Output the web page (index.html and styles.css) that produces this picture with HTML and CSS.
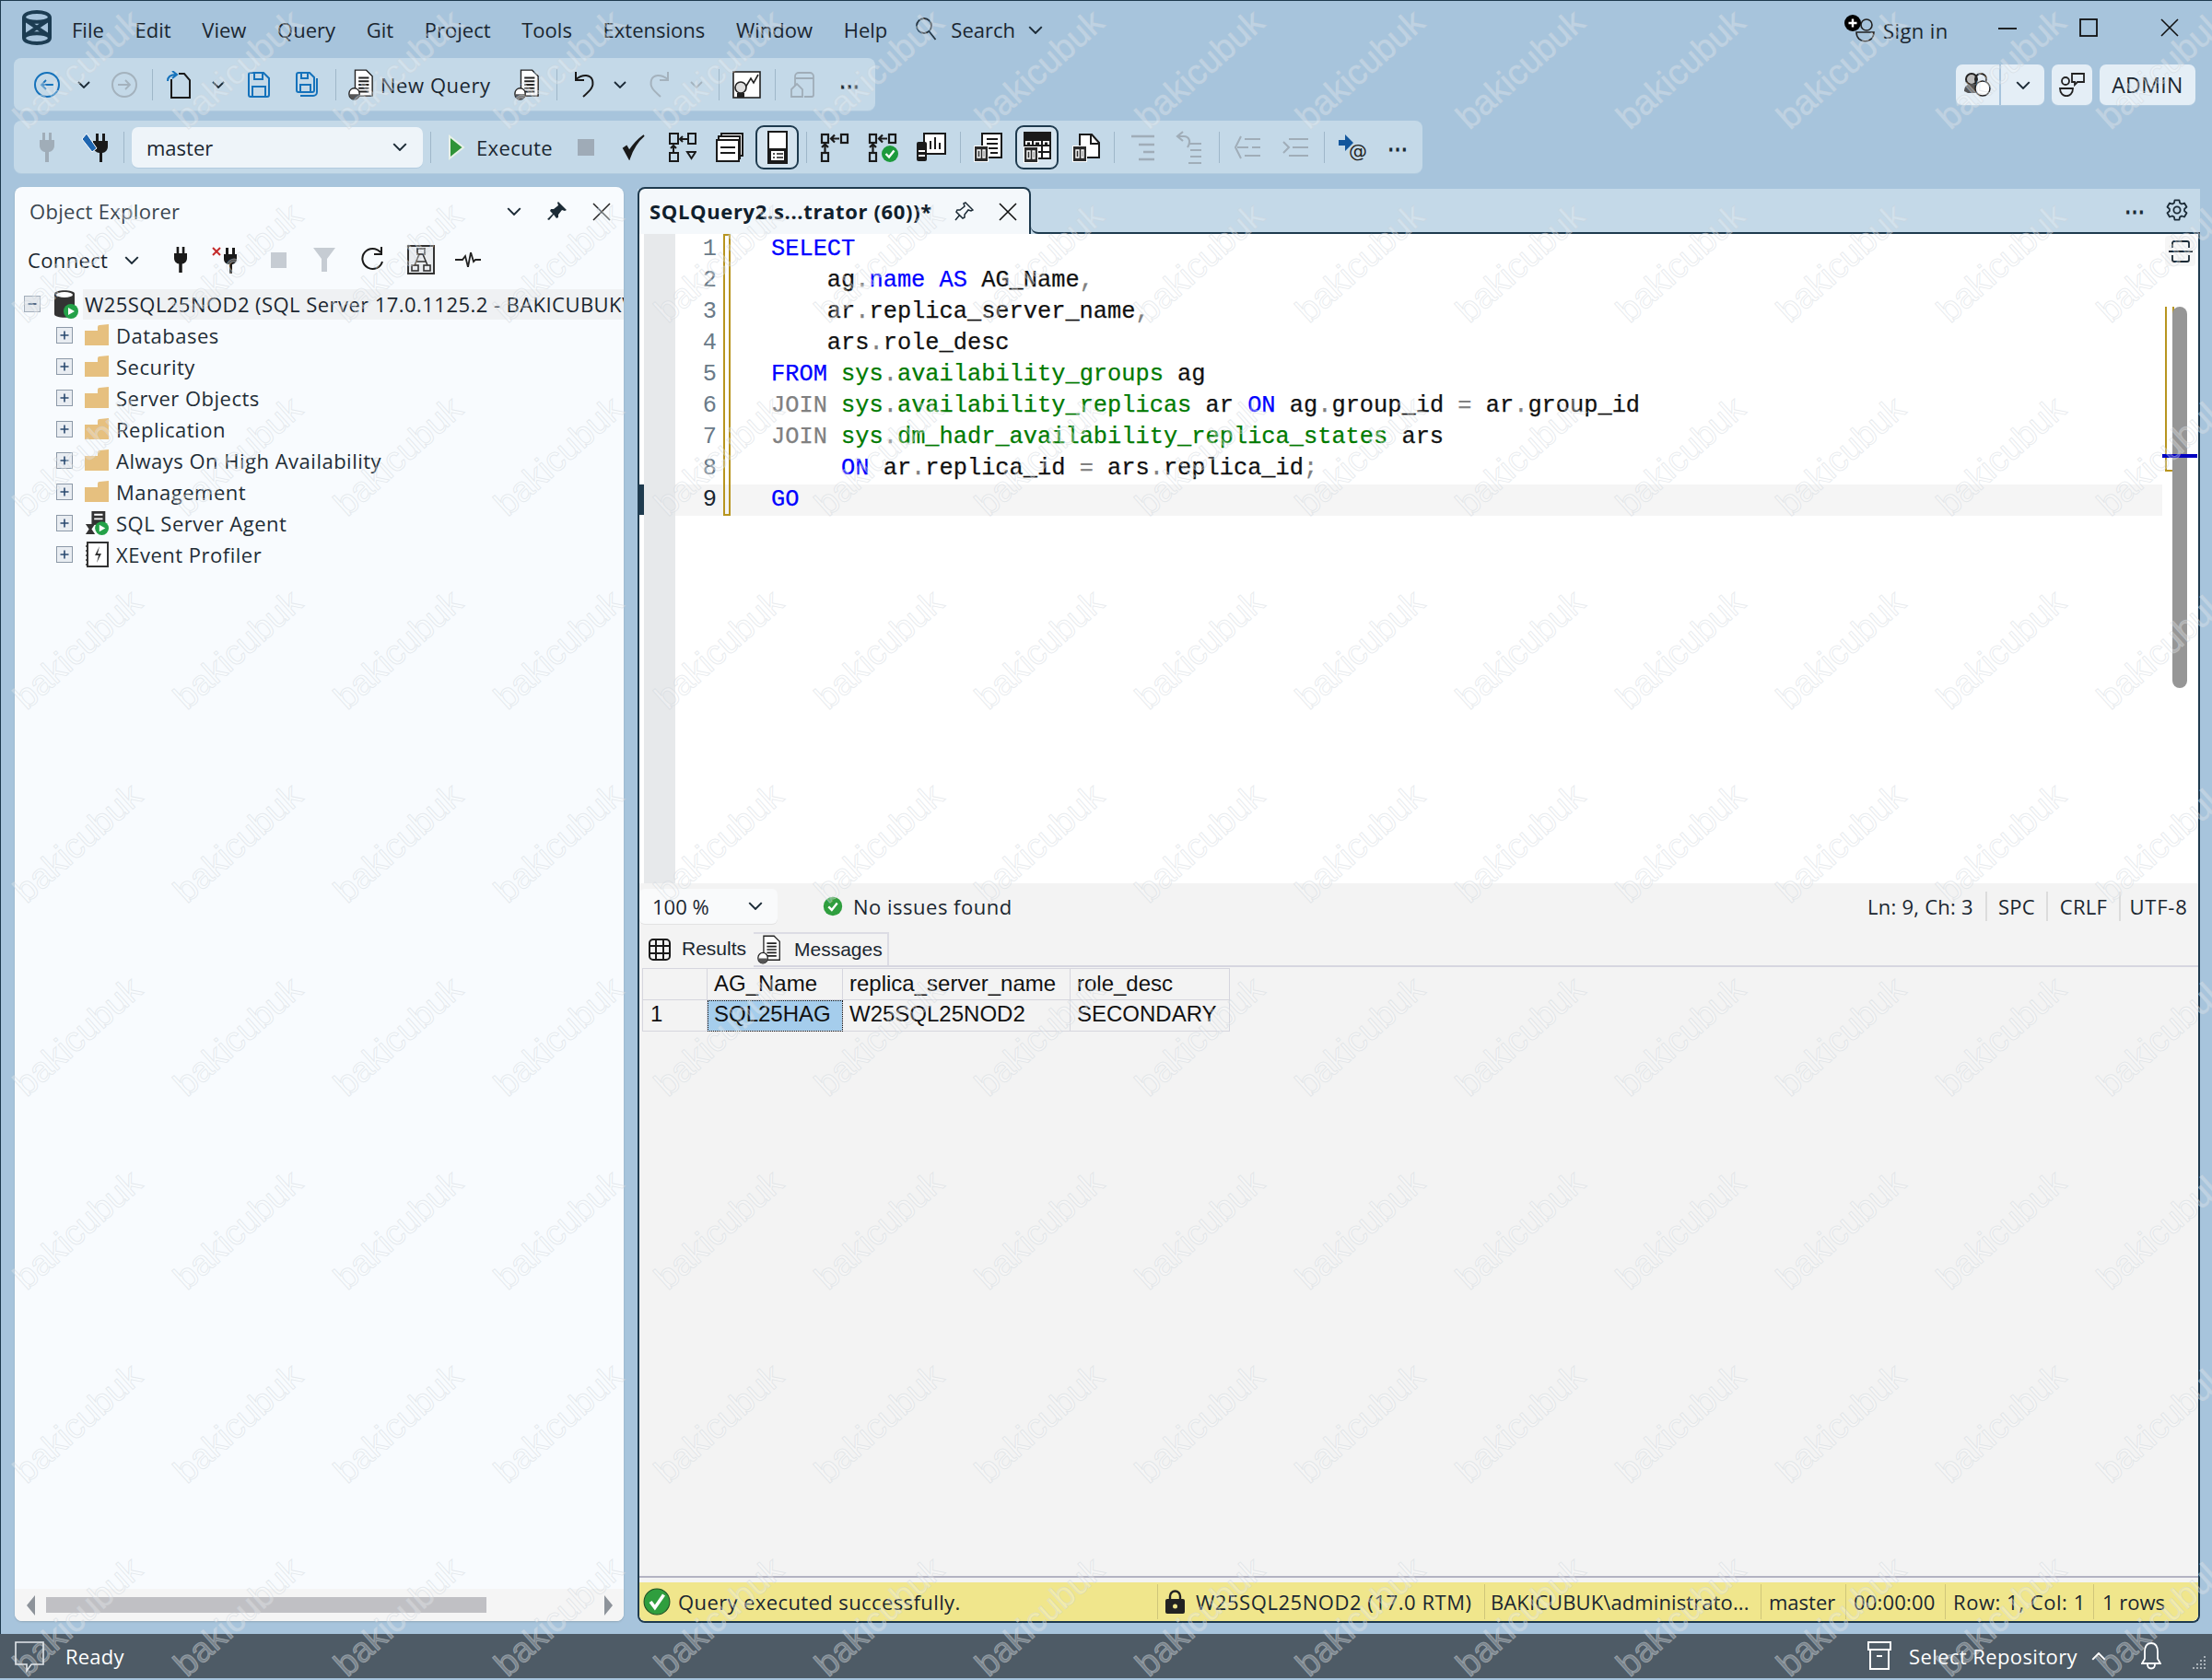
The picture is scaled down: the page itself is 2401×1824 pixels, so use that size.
FILE: index.html
```html
<!DOCTYPE html>
<html lang="en">
<head>
<meta charset="utf-8">
<title>SSMS</title>
<link rel="stylesheet" href="styles.css">
</head>
<body>
<svg class="defs" width="0" height="0" aria-hidden="true">
  <defs>
    <symbol id="chev" viewBox="0 0 14 8"><polyline points="1,1 7,7 13,1" fill="none" stroke="currentColor" stroke-width="1.8"/></symbol>
    <symbol id="plus" viewBox="0 0 18 18"><rect x=".5" y=".5" width="17" height="17" fill="#e9edf2" stroke="#8c99a8"/><path d="M4.5 9h9M9 4.5v9" stroke="#2b4a70" stroke-width="1.6"/></symbol>
    <symbol id="folder" viewBox="0 0 26 24"><path d="M0 7 L14 7 L14 3 Q14 1 16 1 L26 0 V23 H0Z" fill="#e6c07f"/></symbol>
    <symbol id="plug" viewBox="0 0 18 32"><path d="M4 0h3v8H4zM11 0h3v8h-3zM1 8h16v6c0 4-3 7-6 7v11H7V21c-3 0-6-3-6-7z" fill="currentColor"/></symbol>
    <symbol id="docplug" viewBox="0 0 30 36"><path d="M8 1h13l7 7v23H8z" fill="#fff" stroke="#222" stroke-width="1.5"/><path d="M12 10h12M12 14h12M12 18h12M12 22h12M12 26h12" stroke="#222" stroke-width="2"/><rect x="1" y="22" width="12" height="13" rx="6" fill="#fff" stroke="#222" stroke-width="1.5"/><path d="M1.5 29h11v1a5 5 0 0 1-11 0z" fill="#555"/></symbol>
    <symbol id="ok" viewBox="0 0 28 28"><circle cx="14" cy="14" r="13" fill="#2f9e3e"/><polyline points="8,14.5 12.5,19 20,9.5" fill="none" stroke="#fff" stroke-width="3"/></symbol>
    <symbol id="tbl01" viewBox="0 0 16 18"><rect width="16" height="18" fill="#fff"/><rect x="1" y="1" width="14" height="16" fill="#2a2a2a"/><path d="M4 5h3v8H4zM10 5h2v8h-2z" fill="none" stroke="#fff" stroke-width="1.4"/></symbol>
    <symbol id="flow" viewBox="0 0 32 32"><g fill="none" stroke="#1a1a1a" stroke-width="2.2"><rect x="2" y="2" width="7" height="9"/><rect x="23" y="2" width="7" height="9"/><rect x="2" y="22" width="7" height="9"/><path d="M21 6.500H12M16 2.500l-4 4 4 4M5.500 21V13M2 16l3.500-3.500L9 16"/></g></symbol>
  </defs>
</svg>
<div class="app">
  <header class="titlebar">
    <svg class="logo" width="34" height="38" viewBox="0 0 34 38"><g fill="none" stroke="#1c3c52" stroke-width="4"><path d="M3 8c0-8 28-8 28 0v22c0 8-28 8-28 0z"/></g><path d="M3 9c6 5 22 5 28 0M3 29c6-5 22-5 28 0M5 11l24 16M29 11L5 27" fill="none" stroke="#1c3c52" stroke-width="4"/></svg>
    <nav class="menu">
      <span class="mi">File</span><span class="mi">Edit</span><span class="mi">View</span><span class="mi">Query</span><span class="mi">Git</span><span class="mi">Project</span><span class="mi">Tools</span><span class="mi">Extensions</span><span class="mi">Window</span><span class="mi">Help</span>
    </nav>
    <div class="search">
      <svg width="24" height="26" viewBox="0 0 24 26"><circle cx="10" cy="10" r="8" fill="none" stroke="#26343f" stroke-width="1.8"/><path d="M15.5 16l7 9" stroke="#26343f" stroke-width="1.8"/></svg>
      <span class="search-label">Search</span>
      <svg class="chev" width="16" height="9"><use href="#chev"/></svg>
    </div>
    <div class="signin">
      <svg width="33" height="30" viewBox="0 0 33 30"><circle cx="24" cy="11" r="6" fill="none" stroke="#222" stroke-width="1.6"/><path d="M13 19h19c0 13-19 13-19 0z" fill="none" stroke="#222" stroke-width="1.6"/><circle cx="9" cy="9" r="9" fill="#000"/><path d="M4.5 9h9M9 4.5v9" stroke="#fff" stroke-width="2.4"/></svg>
      <span class="signin-label">Sign in</span>
    </div>
    <div class="winctl">
      <svg width="20" height="20" viewBox="0 0 20 20"><path d="M0 11h20" stroke="#111" stroke-width="1.8"/></svg>
      <svg width="20" height="20" viewBox="0 0 20 20"><rect x="1" y="1" width="18" height="18" fill="none" stroke="#111" stroke-width="1.8"/></svg>
      <svg width="20" height="20" viewBox="0 0 20 20"><path d="M1 1l18 18M19 1L1 19" stroke="#111" stroke-width="1.6"/></svg>
    </div>
  </header>

  <section class="toolarea">
    <div class="toolcol">
      <div class="toolbar tb1">
        <svg class="ml22" width="28" height="30" viewBox="0 0 28 30"><circle cx="14" cy="15" r="13" fill="none" stroke="#1572bb" stroke-width="2"/><path d="M21 15H8M13 10l-5 5 5 5" fill="none" stroke="#1572bb" stroke-width="1.8"/></svg>
        <svg class="ml19 chev" width="14" height="8"><use href="#chev"/></svg>
        <svg class="ml23" width="28" height="30" viewBox="0 0 28 30"><circle cx="14" cy="15" r="13" fill="none" stroke="#a4b2bd" stroke-width="2"/><path d="M7 15h13M15 10l5 5-5 5" fill="none" stroke="#a4b2bd" stroke-width="1.8"/></svg>
        <i class="sep ml16"></i>
        <svg class="ml14" width="28" height="30" viewBox="0 0 28 30"><path d="M6 9v20h20V10l-6-7h-6" fill="none" stroke="#1a1a1a" stroke-width="2"/><path d="M2 11c0-5 3-7 9-7M7 0l5 4-5 4" fill="none" stroke="#1572bb" stroke-width="2"/></svg>
        <svg class="ml22 chev" width="14" height="8"><use href="#chev"/></svg>
        <svg class="ml25" width="24" height="28" viewBox="0 0 24 28"><path d="M3 1h14l6 6v18a2 2 0 0 1-2 2H3a2 2 0 0 1-2-2V3a2 2 0 0 1 2-2z M7 1v7h9V1M5 27V16h14v11" fill="none" stroke="#1572bb" stroke-width="2"/></svg>
        <svg class="ml28" width="24" height="28" viewBox="0 0 24 28"><path d="M3 1h12l5 5v14a2 2 0 0 1-2 2H3a2 2 0 0 1-2-2V3a2 2 0 0 1 2-2zM6 1v6h7V1M5 22v-8h11v8M23 7v15a4 4 0 0 1-4 4H5" fill="none" stroke="#1572bb" stroke-width="2"/></svg>
        <i class="sep ml19"></i>
        <svg class="ml13" width="28" height="34"><use href="#docplug"/></svg>
        <span class="newq">New Query</span>
        <svg class="ml22" width="28" height="34"><use href="#docplug"/></svg>
        <i class="sep ml18"></i>
        <svg class="ml17" width="24" height="30" viewBox="0 0 24 30"><path d="M11 28c8-7 12-11 10-18C19 4 11 3 3 9M3 1v9h9" fill="none" stroke="#1a1a1a" stroke-width="2"/></svg>
        <svg class="ml20 chev" width="14" height="8"><use href="#chev"/></svg>
        <svg class="ml24" width="24" height="30" viewBox="0 0 24 30"><path d="M13 28C5 21 1 17 3 10 5 4 13 3 21 9M21 1v9h-9" fill="none" stroke="#a4b2bd" stroke-width="2"/></svg>
        <svg class="ml21 chev faded" width="14" height="8"><use href="#chev"/></svg>
        <i class="sep ml17"></i>
        <svg class="ml14" width="31" height="30" viewBox="0 0 31 30"><rect x="1" y="1" width="29" height="28" fill="#fff" stroke="#222" stroke-width="1.6"/><path d="M14 18l6-10 3 5 5-9" fill="none" stroke="#222" stroke-width="1.6"/><circle cx="9" cy="18" r="6" fill="#ddd" stroke="#222" stroke-width="1.6"/><rect x="5" y="24" width="8" height="5" fill="#222"/></svg>
        <i class="sep ml15"></i>
        <svg class="ml15" width="28" height="30" viewBox="0 0 28 30"><path d="M6 16V6a4 4 0 0 1 4-4h12a4 4 0 0 1 4 4v20a2 2 0 0 1-2 2h-8M6 8h20" fill="none" stroke="#a0adb8" stroke-width="1.8"/><path d="M2 20l6-6 6 6v8H2z" fill="none" stroke="#a0adb8" stroke-width="1.8"/></svg>
        <span class="dots ml23">&#8943;</span>
      </div>
      <div class="toolbar tb2">
        <svg class="ml27 fadeicon" width="18" height="32"><use href="#plug"/></svg>
        <svg class="ml28" width="30" height="34" viewBox="0 0 30 34"><path d="M16 2h3v8h-3zM23 2h3v8h-3zM13 10h16v6c0 4-3 7-6 7v10h-3V23c-3 0-7-3-7-7z" fill="#1a1a1a"/><path d="M1 8l5-6 11 16-5 4z" fill="#1f66b0" stroke="#fff"/></svg>
        <i class="sep ml16"></i>
        <div class="combo ml8"><span>master</span><svg class="chev" width="16" height="9"><use href="#chev"/></svg></div>
        <i class="sep ml8"></i>
        <svg class="ml18" width="19" height="30" viewBox="0 0 19 30"><path d="M2 3l15 12L2 27z" fill="#2f9338" stroke="#e8f1e8" stroke-width="2"/></svg>
        <span class="exec">Execute</span>
        <svg class="ml30" width="18" height="18" viewBox="0 0 18 18"><rect width="18" height="18" fill="#9fabb7"/></svg>
        <svg class="ml29" width="28" height="28" viewBox="0 0 28 28"><path d="M3 15l6 11C13 14 18 7 25 1 18 6 13 12 9 18L6 13z" fill="#1a1a1a" stroke="#1a1a1a" stroke-width="2"/></svg>
        <svg class="ml24" width="30" height="32" viewBox="0 0 30 32"><g fill="none" stroke="#1a1a1a" stroke-width="2"><rect x="1" y="1" width="9" height="11"/><rect x="21" y="1" width="8" height="11"/><rect x="1" y="22" width="9" height="9"/><path d="M20 7h-8M15 4l-3 3 3 3M5 21v-6M2 17l3-3 3 3M20 21h9l-4.500 7z"/></g></svg>
        <svg class="ml21" width="30" height="32" viewBox="0 0 30 32"><g fill="#fff" stroke="#1a1a1a" stroke-width="2"><rect x="6" y="1" width="23" height="24"/><rect x="3" y="4" width="23" height="24"/><rect x="1" y="8" width="24" height="23"/></g><path d="M5 16h16M5 22h16" stroke="#1a1a1a" stroke-width="2"/></svg>
        <div class="toggle ml13"><svg width="22" height="36" viewBox="0 0 22 36"><rect x="1" y="1" width="20" height="34" fill="#fff" stroke="#1a1a1a" stroke-width="2"/><rect x="1" y="19" width="20" height="16" fill="#1a1a1a"/><rect x="4" y="22" width="14" height="10" fill="#fff"/><path d="M6 25h2M10 25h7M6 29h2M10 29h7" stroke="#1a1a1a" stroke-width="1.5"/></svg></div>
        <i class="sep ml8"></i>
        <svg class="ml14" width="32" height="32"><use href="#flow"/></svg>
        <svg class="ml20" width="33" height="32" viewBox="0 0 33 32"><use href="#flow" width="32" height="32"/><circle cx="24" cy="23" r="9" fill="#1d9a3c"/><polyline points="19.500,23 23,26.500 28.500,19.500" fill="none" stroke="#fff" stroke-width="2.400"/></svg>
        <svg class="ml19" width="33" height="32" viewBox="0 0 33 32"><rect x="9" y="1" width="23" height="22" fill="#fff" stroke="#1a1a1a" stroke-width="2"/><path d="M16 18V9M21 18V5M26 18v-7" stroke="#1a1a1a" stroke-width="2"/><rect x="1" y="10" width="11" height="21" rx="2" fill="#1a1a1a"/><path d="M3 20h7M3 25h7" stroke="#fff" stroke-width="2"/></svg>
        <i class="sep ml15"></i>
        <svg class="ml14" width="31" height="32" viewBox="0 0 31 32"><rect x="9" y="1" width="21" height="26" fill="#fff" stroke="#1a1a1a" stroke-width="2"/><path d="M14 7h12M14 12h12M14 17h12M18 22h8" stroke="#1a1a1a" stroke-width="2"/><use href="#tbl01" x="0" y="14" width="16" height="18"/></svg>
        <div class="toggle ml14"><svg width="30" height="34" viewBox="0 0 30 34"><rect x="1" y="1" width="28" height="28" fill="#fff" stroke="#1a1a1a" stroke-width="2"/><rect x="1" y="1" width="28" height="9" fill="#1a1a1a"/><path d="M1 15h28M1 22h28M10 10v19M20 10v19" stroke="#1a1a1a" stroke-width="2"/><path d="M4 13h3M13 13h4M23 13h3" stroke="#1a1a1a" stroke-width="3"/><use href="#tbl01" x="0" y="16" width="16" height="18"/></svg></div>
        <svg class="ml15" width="30" height="32" viewBox="0 0 30 32"><path d="M8 18V2h13l8 9v16H16" fill="#fff" stroke="#1a1a1a" stroke-width="2"/><path d="M20 2v10h9" fill="none" stroke="#1a1a1a" stroke-width="2"/><use href="#tbl01" x="0" y="14" width="16" height="18"/></svg>
        <i class="sep ml15"></i>
        <svg class="ml17" width="27" height="30" viewBox="0 0 27 30"><path d="M1 3h10M9 3h17M9 12h17M14 20h12M9 28h17" stroke="#a0adb8" stroke-width="2.400" fill="none"/></svg>
        <svg class="ml22" width="28" height="36" viewBox="0 0 28 36"><path d="M8 1L2 6l6 5M2 6h7c6 0 8 6 4 12M14 14h14M16 21h12M16 28h12M14 35h14" stroke="#a0adb8" stroke-width="2.200" fill="none"/></svg>
        <i class="sep ml19"></i>
        <svg class="ml15" width="29" height="28" viewBox="0 0 29 28"><path d="M8 2L2 14l6 12M4 14h12M12 5h17M12 23h17M20 14h9" stroke="#a0adb8" stroke-width="2" fill="none"/></svg>
        <svg class="ml23" width="29" height="28" viewBox="0 0 29 28"><path d="M2 8l6 6-6 6M8 5h21M12 14h17M8 23h21" stroke="#a0adb8" stroke-width="2" fill="none"/></svg>
        <i class="sep ml17"></i>
        <svg class="ml15" width="30" height="30" viewBox="0 0 30 30"><path d="M0 7h7V1l9 9-9 9v-6H0z" fill="#12569c"/><text class="at" x="11" y="26">@</text></svg>
        <span class="dots ml20">&#8943;</span>
      </div>
    </div>
    <div class="account">
      <div class="acct split">
        <span class="acct-cell"><svg width="32" height="30" viewBox="0 0 32 30"><circle cx="9" cy="9" r="6" fill="#bbb" stroke="#222" stroke-width="2"/><circle cx="19" cy="9" r="6" fill="none" stroke="#222" stroke-width="2"/><path d="M1 22c0-6 4-8 9-8s8 2 9 4v6H5z" fill="#555"/><circle cx="21" cy="19" r="8" fill="#fff" stroke="#222" stroke-width="1.500"/></svg></span>
        <span class="acct-cell narrow"><svg class="chev" width="16" height="9"><use href="#chev"/></svg></span>
      </div>
      <div class="acct chat"><svg width="28" height="26" viewBox="0 0 28 26"><circle cx="7" cy="9" r="4" fill="none" stroke="#222" stroke-width="1.800"/><path d="M1 17h14c0 11-14 11-14 0z" fill="none" stroke="#222" stroke-width="1.800"/><path d="M14 1h13v9h-7l-3 3V10h-3z" fill="none" stroke="#222" stroke-width="1.800"/></svg></div>
      <div class="acct admin">ADMIN</div>
    </div>
  </section>

  <main class="workspace">
    <aside class="explorer">
      <div class="ex-title">
        <span class="ex-name">Object Explorer</span>
        <svg class="chev ex-chev" width="16" height="9"><use href="#chev"/></svg>
        <svg class="ex-pin" width="21" height="21" viewBox="0 0 21 21"><path d="M12 0l9 9-2 1-3-1-4 5 0 3-2 1-3-4-5 6-2-1 6-6-3-3 1-2 3 0 5-4-1-3z" fill="#1c2b36"/></svg>
        <svg class="ex-close" width="20" height="20" viewBox="0 0 20 20"><path d="M1 1l18 18M19 1L1 19" stroke="#222" stroke-width="1.500"/></svg>
      </div>
      <div class="ex-tools">
        <span class="connect">Connect</span>
        <svg class="chev ml15" width="16" height="9"><use href="#chev"/></svg>
        <svg class="et-plug dark" width="16" height="28"><use href="#plug"/></svg>
        <svg class="ml26" width="30" height="30" viewBox="0 0 30 30"><path d="M1 2l8 8M9 2l-8 8" stroke="#c42b2b" stroke-width="2"/><path d="M15 2h3v7h-3zM22 2h3v7h-3zM13 9h14v5c0 4-3 6-5 6v10h-3V20c-3 0-6-2-6-6z" fill="#1a1a1a"/></svg>
        <svg class="et-stop" width="17" height="17" viewBox="0 0 17 17"><rect width="17" height="17" fill="#c6ccd3"/></svg>
        <svg class="ml29" width="24" height="26" viewBox="0 0 24 26"><path d="M0 0h24l-9 12v14h-6V12z" fill="#c6ccd3"/></svg>
        <svg class="ml27" width="26" height="28" viewBox="0 0 26 28"><path d="M22 6a11 11 0 1 0 2 10" fill="none" stroke="#1a1a1a" stroke-width="2"/><path d="M23 0v8h-8" fill="none" stroke="#1a1a1a" stroke-width="2"/></svg>
        <svg class="ml25" width="30" height="32" viewBox="0 0 30 32"><rect x="1" y="1" width="28" height="30" fill="#e9ecef" stroke="#333" stroke-width="2"/><g fill="none" stroke="#333" stroke-width="1.600"><rect x="11" y="4" width="8" height="6"/><rect x="5" y="22" width="7" height="6"/><rect x="18" y="22" width="7" height="6"/><path d="M13 10L8 22M17 10l5 12M9 18h12"/></g></svg>
        <svg class="ml22" width="28" height="16" viewBox="0 0 28 16"><path d="M0 8h8l3-4 3 12 3-16 3 10 2-2h6" fill="none" stroke="#222" stroke-width="1.800"/></svg>
      </div>
      <ul class="tree">
        <li class="tree-root">
          <svg class="tw" width="18" height="18" viewBox="0 0 18 18"><rect x=".5" y=".5" width="17" height="17" fill="#e4e8ed" stroke="#a3aeba"/><path d="M4.500 9h9" stroke="#2b4a70" stroke-width="1.600"/></svg>
          <svg class="srv" width="27" height="32" viewBox="0 0 27 32"><path d="M1 5c0-5 22-5 22 0v22c0 5-22 5-22 0z" fill="#333"/><ellipse cx="12" cy="6" rx="9" ry="3" fill="#fff"/><circle cx="19" cy="24" r="8" fill="#24a148"/><path d="M16 20l7 4-7 4z" fill="#fff"/></svg>
          <span class="tree-server">W25SQL25NOD2 (SQL Server 17.0.1125.2 - BAKICUBUK\administrator)</span>
        </li>
        <li class="tree-item"><svg class="tw" width="18" height="18"><use href="#plus"/></svg><svg class="ti" width="26" height="24"><use href="#folder"/></svg><span>Databases</span></li>
        <li class="tree-item"><svg class="tw" width="18" height="18"><use href="#plus"/></svg><svg class="ti" width="26" height="24"><use href="#folder"/></svg><span>Security</span></li>
        <li class="tree-item"><svg class="tw" width="18" height="18"><use href="#plus"/></svg><svg class="ti" width="26" height="24"><use href="#folder"/></svg><span>Server Objects</span></li>
        <li class="tree-item"><svg class="tw" width="18" height="18"><use href="#plus"/></svg><svg class="ti" width="26" height="24"><use href="#folder"/></svg><span>Replication</span></li>
        <li class="tree-item"><svg class="tw" width="18" height="18"><use href="#plus"/></svg><svg class="ti" width="26" height="24"><use href="#folder"/></svg><span>Always On High Availability</span></li>
        <li class="tree-item"><svg class="tw" width="18" height="18"><use href="#plus"/></svg><svg class="ti" width="26" height="24"><use href="#folder"/></svg><span>Management</span></li>
        <li class="tree-item"><svg class="tw" width="18" height="18"><use href="#plus"/></svg><svg class="ti" width="28" height="28" viewBox="0 0 28 28"><rect x="8" y="0" width="16" height="16" fill="#333"/><path d="M11 4h10M11 9h10" stroke="#fff" stroke-width="2"/><path d="M1 15h11L8 21l4 6H1l4-6z" fill="#333"/><circle cx="20" cy="20" r="8" fill="#24a148"/><path d="M17 16l7 4-7 4z" fill="#fff"/></svg><span>SQL Server Agent</span></li>
        <li class="tree-item"><svg class="tw" width="18" height="18"><use href="#plus"/></svg><svg class="ti" width="26" height="28" viewBox="0 0 26 28"><rect x="3" y="1" width="22" height="26" fill="#fff" stroke="#333" stroke-width="2"/><path d="M1 5h3M1 10h3M1 15h3M1 20h3M1 25h3" stroke="#333" stroke-width="1.500"/><path d="M16 5l-5 10h4l-2 8 5-10h-4z" fill="#333"/></svg><span>XEvent Profiler</span></li>
      </ul>
      <div class="ex-scroll">
        <svg width="9" height="22" viewBox="0 0 9 22"><path d="M9 0v22L0 11z" fill="#8d939a"/></svg>
        <div class="ex-track"><div class="ex-thumb"></div></div>
        <svg width="9" height="22" viewBox="0 0 9 22"><path d="M0 0v22l9-11z" fill="#8d939a"/></svg>
      </div>
    </aside>

    <section class="docwell">
      <div class="tabstrip">
        <div class="tab">
          <span class="tab-name">SQLQuery2.s...trator (60))*</span>
          <svg class="tab-pin" width="21" height="21" viewBox="0 0 21 21"><path d="M12 1l8 8-2 1-3-1-4 5 0 3-2 1-7-7 1-2 3 0 5-4-1-3zM6 14l-5 6" fill="none" stroke="#1c2b36" stroke-width="1.500"/></svg>
          <svg class="tab-x" width="20" height="20" viewBox="0 0 20 20"><path d="M1 1l18 18M19 1L1 19" stroke="#111" stroke-width="1.600"/></svg>
        </div>
        <div class="tab-rest">
          <span class="dots">&#8943;</span>
          <svg width="24" height="24" viewBox="0 0 24 24"><path d="M9.500 1.300L14.500 1.300 15.100 4.400 17.050 5.500 20 4.500 22.500 8.800 20.100 10.900 20.100 13.100 22.500 15.200 20 19.500 17.050 18.500 15.100 19.600 14.500 22.700 9.500 22.700 8.900 19.600 6.950 18.500 4 19.500 1.500 15.200 3.900 13.100 3.900 10.900 1.500 8.800 4 4.500 6.950 5.500 8.900 4.400Z" fill="none" stroke="#1a2a36" stroke-width="1.800" stroke-linejoin="round"/><circle cx="12" cy="12" r="3.600" fill="none" stroke="#1a2a36" stroke-width="1.800"/></svg>
        </div>
      </div>
      <div class="editor">
        <div class="marker"><div class="marker-on"></div></div>
        <div class="glyphs"></div>
        <div class="lines">
          <div class="line first"><span class="num">1</span><i class="chg"></i><code class="code"><b class="k">SELECT</b></code></div>
          <div class="line"><span class="num">2</span><i class="chg"></i><code class="code">    ag<b class="p">.</b><b class="k">name</b> <b class="k">AS</b> AG_Name<b class="p">,</b></code></div>
          <div class="line"><span class="num">3</span><i class="chg"></i><code class="code">    ar<b class="p">.</b>replica_server_name<b class="p">,</b></code></div>
          <div class="line"><span class="num">4</span><i class="chg"></i><code class="code">    ars<b class="p">.</b>role_desc</code></div>
          <div class="line"><span class="num">5</span><i class="chg"></i><code class="code"><b class="k">FROM</b> <b class="s">sys</b><b class="p">.</b><b class="s">availability_groups</b> ag</code></div>
          <div class="line"><span class="num">6</span><i class="chg"></i><code class="code"><b class="p">JOIN</b> <b class="s">sys</b><b class="p">.</b><b class="s">availability_replicas</b> ar <b class="k">ON</b> ag<b class="p">.</b>group_id <b class="p">=</b> ar<b class="p">.</b>group_id</code></div>
          <div class="line"><span class="num">7</span><i class="chg"></i><code class="code"><b class="p">JOIN</b> <b class="s">sys</b><b class="p">.</b><b class="s">dm_hadr_availability_replica_states</b> ars</code></div>
          <div class="line"><span class="num">8</span><i class="chg"></i><code class="code">     <b class="k">ON</b> ar<b class="p">.</b>replica_id <b class="p">=</b> ars<b class="p">.</b>replica_id<b class="p">;</b></code></div>
          <div class="line cur last"><span class="num">9</span><i class="chg"></i><code class="code"><b class="k">GO</b></code></div>
        </div>
        <div class="splitbtn"><svg width="26" height="24" viewBox="0 0 26 24"><path d="M0 12h26M4 8V3a2 2 0 0 1 2-2h14a2 2 0 0 1 2 2v5M4 16v5a2 2 0 0 0 2 2h14a2 2 0 0 0 2-2v-5" fill="none" stroke="#1a2a36" stroke-width="1.800"/></svg></div>
        <div class="ov-change"></div>
        <div class="ov-thumb"></div>
        <div class="ov-caret"></div>
      </div>
      <div class="edstatus">
        <div class="zoombox"><span>100 %</span><svg class="chev" width="16" height="9"><use href="#chev"/></svg></div>
        <svg class="issue-ic" width="22" height="22"><use href="#ok"/></svg>
        <span class="issue">No issues found</span>
        <div class="edinfo">
          <span class="ei ei-ln">Ln: 9, Ch: 3</span><span class="ei ei-spc">SPC</span><span class="ei ei-crlf">CRLF</span><span class="ei ei-utf">UTF-8</span>
        </div>
      </div>
      <div class="restabs">
        <div class="rt rt-on"><svg width="24" height="24" viewBox="0 0 24 24"><rect x="1" y="1" width="22" height="22" rx="4" fill="none" stroke="#1a1a1a" stroke-width="2"/><path d="M8 1v22M16 1v22M1 8h22M1 16h22" stroke="#1a1a1a" stroke-width="2"/></svg><span>Results</span></div>
        <div class="rt rt-off"><svg width="26" height="32"><use href="#docplug"/></svg><span>Messages</span></div>
      </div>
      <div class="grid">
        <table class="results">
          <thead><tr><th class="c0"></th><th class="c1">AG_Name</th><th class="c2">replica_server_name</th><th class="c3">role_desc</th></tr></thead>
          <tbody><tr><td class="c0">1</td><td class="c1 sel">SQL25HAG</td><td class="c2">W25SQL25NOD2</td><td class="c3">SECONDARY</td></tr></tbody>
        </table>
      </div>
      <footer class="qstatus">
        <svg class="q-ok" width="30" height="30" viewBox="0 0 28 28"><circle cx="14" cy="14" r="13" fill="#2f9e3e" stroke="#1c4f25"/><polyline points="7.500,14 12,20 21,7" fill="none" stroke="#fff" stroke-width="3.400"/></svg>
        <span class="q-msg">Query executed successfully.</span>
        <div class="qf q-srv"><svg width="21" height="26" viewBox="0 0 21 26"><path d="M5 11V7a5.500 5.500 0 0 1 11 0v4" fill="none" stroke="#222" stroke-width="2.400"/><rect y="10" width="21" height="16" rx="2" fill="#222"/><circle cx="10.500" cy="18" r="2.500" fill="#f0e68c"/></svg><span>W25SQL25NOD2 (17.0 RTM)</span></div>
        <div class="qf q-user">BAKICUBUK\administrato...</div>
        <div class="qf q-db">master</div>
        <div class="qf q-time">00:00:00</div>
        <div class="qf q-pos">Row: 1, Col: 1</div>
        <div class="qf q-rows">1 rows</div>
      </footer>
    </section>
  </main>

  <footer class="statusbar">
    <svg class="st-msg" width="32" height="34" viewBox="0 0 32 34"><path d="M1 1h30v24H18l-5 7v-7H1z" fill="none" stroke="#e4e8ec" stroke-width="1.600"/></svg>
    <span class="st-ready">Ready</span>
    <svg class="st-repo" width="26" height="32" viewBox="0 0 26 32"><path d="M1 1h24v8H1zM3 9v21h20V9M10 16h6" fill="none" stroke="#fff" stroke-width="2"/></svg>
    <span class="st-select">Select Repository</span>
    <svg class="st-caret" width="16" height="9" viewBox="0 0 14 8"><polyline points="1,7 7,1 13,7" fill="none" stroke="#fff" stroke-width="1.800"/></svg>
    <svg class="st-bell" width="22" height="30" viewBox="0 0 22 30"><path d="M11 1c-5 0-7 4-7 9v8l-3 5h20l-3-5v-8c0-5-2-9-7-9zM7 24c0 6 8 6 8 0" fill="none" stroke="#fff" stroke-width="1.800"/></svg>
    <svg class="st-grip" width="16" height="16" viewBox="0 0 16 16"><path d="M13 1h2v2h-2zM9 5h2v2H9zM13 5h2v2h-2zM5 9h2v2H5zM9 9h2v2H9zM13 9h2v2h-2zM1 13h2v2H1zM5 13h2v2H5zM9 13h2v2H9zM13 13h2v2h-2z" fill="#aab2b9"/></svg>
  </footer>

  <div class="watermarks" aria-hidden="true">
    <span>bakicubuk</span><span>bakicubuk</span><span>bakicubuk</span><span>bakicubuk</span><span>bakicubuk</span><span>bakicubuk</span><span>bakicubuk</span><span>bakicubuk</span><span>bakicubuk</span><span>bakicubuk</span><span>bakicubuk</span><span>bakicubuk</span><span>bakicubuk</span><span>bakicubuk</span>
    <span>bakicubuk</span><span>bakicubuk</span><span>bakicubuk</span><span>bakicubuk</span><span>bakicubuk</span><span>bakicubuk</span><span>bakicubuk</span><span>bakicubuk</span><span>bakicubuk</span><span>bakicubuk</span><span>bakicubuk</span><span>bakicubuk</span><span>bakicubuk</span><span>bakicubuk</span>
    <span>bakicubuk</span><span>bakicubuk</span><span>bakicubuk</span><span>bakicubuk</span><span>bakicubuk</span><span>bakicubuk</span><span>bakicubuk</span><span>bakicubuk</span><span>bakicubuk</span><span>bakicubuk</span><span>bakicubuk</span><span>bakicubuk</span><span>bakicubuk</span><span>bakicubuk</span>
    <span>bakicubuk</span><span>bakicubuk</span><span>bakicubuk</span><span>bakicubuk</span><span>bakicubuk</span><span>bakicubuk</span><span>bakicubuk</span><span>bakicubuk</span><span>bakicubuk</span><span>bakicubuk</span><span>bakicubuk</span><span>bakicubuk</span><span>bakicubuk</span><span>bakicubuk</span>
    <span>bakicubuk</span><span>bakicubuk</span><span>bakicubuk</span><span>bakicubuk</span><span>bakicubuk</span><span>bakicubuk</span><span>bakicubuk</span><span>bakicubuk</span><span>bakicubuk</span><span>bakicubuk</span><span>bakicubuk</span><span>bakicubuk</span><span>bakicubuk</span><span>bakicubuk</span>
    <span>bakicubuk</span><span>bakicubuk</span><span>bakicubuk</span><span>bakicubuk</span><span>bakicubuk</span><span>bakicubuk</span><span>bakicubuk</span><span>bakicubuk</span><span>bakicubuk</span><span>bakicubuk</span><span>bakicubuk</span><span>bakicubuk</span><span>bakicubuk</span><span>bakicubuk</span>
    <span>bakicubuk</span><span>bakicubuk</span><span>bakicubuk</span><span>bakicubuk</span><span>bakicubuk</span><span>bakicubuk</span><span>bakicubuk</span><span>bakicubuk</span><span>bakicubuk</span><span>bakicubuk</span><span>bakicubuk</span><span>bakicubuk</span><span>bakicubuk</span><span>bakicubuk</span>
    <span>bakicubuk</span><span>bakicubuk</span><span>bakicubuk</span><span>bakicubuk</span><span>bakicubuk</span><span>bakicubuk</span><span>bakicubuk</span><span>bakicubuk</span><span>bakicubuk</span><span>bakicubuk</span><span>bakicubuk</span><span>bakicubuk</span><span>bakicubuk</span><span>bakicubuk</span>
    <span>bakicubuk</span><span>bakicubuk</span><span>bakicubuk</span><span>bakicubuk</span><span>bakicubuk</span><span>bakicubuk</span><span>bakicubuk</span><span>bakicubuk</span><span>bakicubuk</span><span>bakicubuk</span><span>bakicubuk</span><span>bakicubuk</span><span>bakicubuk</span><span>bakicubuk</span>
  </div>
</div>
</body>
</html>
```
FILE: styles.css
```css
* { box-sizing: border-box; }
html, body { margin: 0; padding: 0; }
body { font-family: "Open Sans", "Noto Sans", sans-serif; font-size: 22px; color: #1a2630; background: #a7c4dc; }
.defs { position: absolute; }
svg { display: block; flex: none; }
.app { position: relative; width: 2401px; height: 1824px; overflow: hidden; background: #a7c4dc; box-shadow: inset 1px 1px 0 #1e3a4e; display: flex; flex-direction: column; }
.chev { color: #1b2a36; }
.faded { color: #a4b2bd; }
.fadeicon { color: #a0adb8; }
.dark { color: #1a1a1a; }
.ml8 { margin-left: 8px; } .ml13 { margin-left: 13px; } .ml14 { margin-left: 14px; } .ml15 { margin-left: 15px; } .ml16 { margin-left: 16px; } .ml17 { margin-left: 17px; } .ml18 { margin-left: 18px; } .ml19 { margin-left: 19px; } .ml20 { margin-left: 20px; } .ml21 { margin-left: 21px; } .ml22 { margin-left: 22px; } .ml23 { margin-left: 23px; } .ml24 { margin-left: 24px; } .ml25 { margin-left: 25px; } .ml26 { margin-left: 26px; } .ml27 { margin-left: 27px; } .ml28 { margin-left: 28px; } .ml29 { margin-left: 29px; } .ml30 { margin-left: 30px; }

/* title bar */
.titlebar { height: 63px; flex: none; display: flex; align-items: center; padding: 4px 0 0 23px; position: relative; }
.logo { margin-top: -8px; }
.menu { display: flex; margin-left: 21px; gap: 33.700px; margin-top: -3px; }
.mi { display: block; line-height: 30px; }
.search { display: flex; align-items: center; margin-left: 30px; margin-top: -6px; }
.search-label { margin-left: 15px; margin-top: 3px; width: 75px; }
.search .chev { margin-left: 9px; margin-top: 3px; }
.signin { margin-left: auto; display: flex; align-items: center; margin-top: -5px; }
.signin-label { margin-left: 9px; width: 78px; margin-top: 3px; letter-spacing: .4px; }
.winctl { display: flex; gap: 68px; margin-left: 47px; margin-right: 36px; margin-top: -7px; }

/* toolbars */
.toolarea { height: 140px; flex: none; display: flex; justify-content: space-between; padding-left: 15px; }
.toolcol { display: flex; flex-direction: column; gap: 11px; }
.toolbar { height: 57px; background: #c4d9e8; border-radius: 8px; display: flex; align-items: center; box-shadow: 0 1px 0 #b2cbdf; }
.tb1 { width: 935px; }
.tb2 { width: 1529px; }
.sep { display: block; width: 1px; height: 34px; background: #9fb7c9; flex: none; }
.newq { margin-left: 7px; width: 123px; white-space: nowrap; letter-spacing: .55px; }
.dots { font-size: 22px; font-weight: 700; width: 28px; text-align: center; line-height: 20px; color: #1a2a36; }
.combo { width: 316px; height: 44px; background: #eef4f9; border-radius: 7px; display: flex; align-items: center; justify-content: space-between; padding: 0 17px 0 16px; box-shadow: 0 1px 0 #b2cbdf; }
.exec { margin-left: 12px; width: 80px; white-space: nowrap; letter-spacing: .4px; }
.toggle { width: 47px; height: 48px; border: 2px solid #1e3a4e; border-radius: 9px; display: flex; align-items: center; justify-content: center; background: #d5e4ef; flex: none; }
.at { font-family: "DejaVu Sans", sans-serif; font-size: 20px; fill: #222; }

.account { display: flex; gap: 8px; padding: 7px 18px 0 0; height: 51px; }
.acct { height: 44px; background: #e4eef6; border-radius: 7px; display: flex; align-items: center; justify-content: center; box-shadow: 0 1px 0 #b2cbdf; }
.split { width: 96px; justify-content: flex-start; }
.acct-cell { display: flex; align-items: center; justify-content: center; width: 49px; height: 44px; border-right: 2px solid #a7c4dc; }
.acct-cell.narrow { width: 47px; border: 0; }
.chat { width: 44px; }
.admin { width: 104px; font-size: 23px; letter-spacing: .4px; }

/* workspace */
.workspace { height: 1569px; flex: none; display: flex; align-items: stretch; padding-left: 16px; padding-right: 13px; padding-bottom: 10px; gap: 15px; }
.explorer { width: 661px; margin-bottom: 2px; background: #f8fbfe; border-radius: 8px; display: flex; flex-direction: column; box-shadow: 0 1px 2px #8fa6b8; overflow: hidden; }
.ex-title { height: 53px; flex: none; display: flex; align-items: center; padding: 0 0 0 16px; }
.ex-name { width: 518px; color: #3a4650; letter-spacing: .3px; margin-top: -2px; }
.ex-pin { margin-left: 28px; }
.ex-close { margin-left: 28px; }
.ex-tools { height: 52px; flex: none; display: flex; align-items: center; padding-left: 14px; }
.connect { width: 90px; letter-spacing: .35px; }
.et-plug { margin-left: 37px; }
.et-stop { margin-left: 34px; }
.tree { list-style: none; margin: 5px 0 0; padding: 0; flex: 1; min-height: 0; }
.tree-root { display: flex; align-items: center; height: 34px; padding-left: 10px; position: relative; }
.tree-root .srv { margin-left: 14px; }
.tree-server { margin-left: 5px; padding-left: 2px; flex: 1; min-width: 0; background: #eff1f3; line-height: 33px; white-space: nowrap; overflow: hidden; letter-spacing: .45px; }
.tree-item { display: flex; align-items: center; height: 34px; padding-left: 45px; }
.tree-item .ti { margin-left: 13px; width: 26px; }
.tree-item span { margin-left: 8px; white-space: nowrap; color: #222d36; letter-spacing: .5px; }
.ex-scroll { height: 35px; flex: none; background: #f5f5f5; display: flex; align-items: center; padding: 0 12px 0 13px; }
.ex-track { flex: 1; padding: 0 12px; }
.ex-thumb { width: 478px; height: 17px; background: #c0c0c4; }

/* document well */
.docwell { flex: 1; min-width: 0; display: flex; flex-direction: column; border-left: 2px solid #1e3a4e; border-right: 2px solid #1e3a4e; border-bottom: 2px solid #1e3a4e; border-radius: 8px; background: #f3f3f3; }
.tabstrip { height: 51px; flex: none; display: flex; margin-left: -2px; margin-right: -2px; background: linear-gradient(#a7c4dc 0, #a7c4dc 2px, #c4d9e8 2px); }
.tab { width: 427px; height: 51px; flex: none; display: flex; align-items: center; background: #f4f8fb; border: 2px solid #1e3a4e; border-bottom: 0; border-radius: 8px 8px 0 0; padding-left: 11px; }
.tab-name { font-weight: 700; width: 331px; white-space: nowrap; letter-spacing: .65px; color: #10202c; margin-top: -2px; }
.tab-x { margin-left: 27px; }
.tab-rest { flex: 1; height: 51px; border-bottom: 2px solid #1e3a4e; display: flex; align-items: center; justify-content: flex-end; padding-right: 13px; gap: 20px; border-bottom-left-radius: 8px; }
.editor { height: 705px; flex: none; display: flex; background: #fff; position: relative; overflow: hidden; }
.marker { width: 5px; flex: none; }
.marker-on { height: 33px; margin-top: 272px; background: #1e3a4e; }
.glyphs { width: 34px; background: #e7e9eb; flex: none; }
.lines { width: 1614px; flex: none; }
.line { display: flex; height: 34px; }
.num { width: 45px; text-align: right; font-family: "Liberation Mono", monospace; font-size: 25.35px; line-height: 34px; color: #6a7a88; }
.cur { background: #f5f5f5; }
.cur .num { color: #1a2630; }
.chg { display: block; margin-left: 7px; width: 8px; flex: none; border-left: 2px solid #b8951f; border-right: 2px solid #b8951f; }
.first .chg { border-top: 2px solid #b8951f; }
.last .chg { border-bottom: 2px solid #b8951f; }
.code { font-family: "Liberation Mono", monospace; font-size: 25.35px; line-height: 34px; white-space: pre; padding-left: 44px; color: #111; -webkit-text-stroke: .25px; }
.code b { font-weight: 400; }
.k { color: #0000ff; }
.s { color: #007a00; }
.p { color: #808080; }
.splitbtn { position: absolute; right: 3px; top: 2px; width: 33px; height: 33px; background: #f6f6f6; border-radius: 4px; display: flex; align-items: center; justify-content: center; }
.ov-change { position: absolute; left: 1656px; top: 79px; width: 10px; height: 179px; border: 2px solid #b8951f; border-top: 0; }
.ov-thumb { position: absolute; left: 1664px; top: 79px; width: 16px; height: 414px; border-radius: 8px; background: #969696; }
.ov-caret { position: absolute; left: 1653px; top: 239px; width: 38px; height: 4px; background: #0000c0; }

.edstatus { height: 49px; flex: none; display: flex; align-items: center; background: #f3f3f3; }
.zoombox { width: 150px; height: 38px; background: #f9fafb; border-radius: 6px; display: flex; align-items: center; justify-content: space-between; padding: 0 16px 0 14px; box-shadow: 0 1px 0 #e2e2e2; }
.issue-ic { margin-left: 49px; }
.issue { margin-left: 11px; letter-spacing: .5px; }
.edinfo { margin-left: auto; display: flex; align-items: center; padding-right: 2px; }
.ei { display: block; line-height: 32px; border-left: 2px solid #dcdcdc; white-space: nowrap; text-align: center; letter-spacing: .25px; }
.ei-ln { border-left: 0; width: 128px; text-align: left; }
.ei-spc { width: 66px; }
.ei-crlf { width: 79px; }
.ei-utf { width: 84px; letter-spacing: .8px; }

.restabs { height: 42px; flex: none; display: flex; align-items: flex-end; border-bottom: 2px solid #d6d6e0; font-family: "Liberation Sans", sans-serif; }
.rt { display: flex; align-items: center; height: 36px; }
.rt-on { width: 124px; padding-left: 10px; height: 38px; margin-bottom: -2px; background: #f3f3f3; font-size: 21px; }
.rt-on span { margin-left: 12px; margin-top: -3px; }
.rt-off { width: 147px; padding-left: 4px; font-size: 21px; border: 2px solid #dcdce4; border-bottom: 0; border-left: 0; }
.rt-off span { margin-left: 14px; }
.grid { flex: 1; min-height: 0; padding: 1px 0 0 3px; border-bottom: 2px solid #b3b3c2; margin-bottom: 5px; background: #f3f3f3; }
.results { border-collapse: collapse; table-layout: fixed; width: 636px; font-family: "Liberation Sans", sans-serif; font-size: 24px; color: #111; }
.results th, .results td { height: 34px; padding: 0 0 2px 7px; text-align: left; font-weight: 400; border: 1px solid #d6d6de; white-space: nowrap; }
.results td { padding: 0 0 4px 7px; }
.c0 { width: 70px; }
.c1 { width: 147px; }
.c2 { width: 247px; }
.c3 { width: 173px; }
.results td.c0 { padding-left: 8px; }
.results td.sel { background: #a5cdec; outline: 1px dotted #111; outline-offset: -1px; }

.qstatus { height: 42px; flex: none; background: #f0e68c; display: flex; align-items: center; border-radius: 0 0 7px 7px; }
.q-ok { margin-left: 4px; }
.q-msg { margin-left: 8px; width: 520px; white-space: nowrap; letter-spacing: .4px; }
.qf { display: flex; align-items: center; height: 38px; border-left: 1px solid #cfc67a; white-space: nowrap; flex: none; padding-left: 8px; }
.q-srv { width: 355px; padding-left: 8px; letter-spacing: .55px; }
.q-srv span { margin-left: 12px; }
.q-user { width: 300px; letter-spacing: .1px; padding-left: 6px; }
.q-db { width: 92px; }
.q-time { width: 108px; letter-spacing: .2px; }
.q-pos { width: 161px; letter-spacing: .55px; }
.q-rows { width: 114px; padding-left: 9px; }

/* status bar */
.statusbar { height: 50px; flex: none; margin-top: 2px; background: #4e5b66; border-bottom: 2px solid #a7c4dc; display: flex; align-items: center; color: #fff; padding-left: 16px; }
.st-msg { margin-top: 2px; }
.st-ready { margin-left: 23px; letter-spacing: .2px; }
.st-repo { margin-left: auto; }
.st-select { margin-left: 19px; width: 184px; white-space: nowrap; letter-spacing: .4px; }
.st-caret { margin-left: 14px; }
.st-bell { margin-left: 38px; }
.st-grip { margin-left: 33px; margin-right: 6px; margin-top: 14px; }

/* watermark overlay */
.watermarks { position: absolute; left: -3px; top: -30px; width: 2436px; display: grid; grid-template-columns: repeat(14, 174px); grid-auto-rows: 210px; pointer-events: none; font-family: "Liberation Sans", sans-serif; font-size: 38px; }
.watermarks span { display: flex; align-items: center; justify-content: center; transform: rotate(-42deg); color: rgba(255,255,255,.25); -webkit-text-stroke: 1px rgba(205,212,218,.45); white-space: nowrap; }
```
